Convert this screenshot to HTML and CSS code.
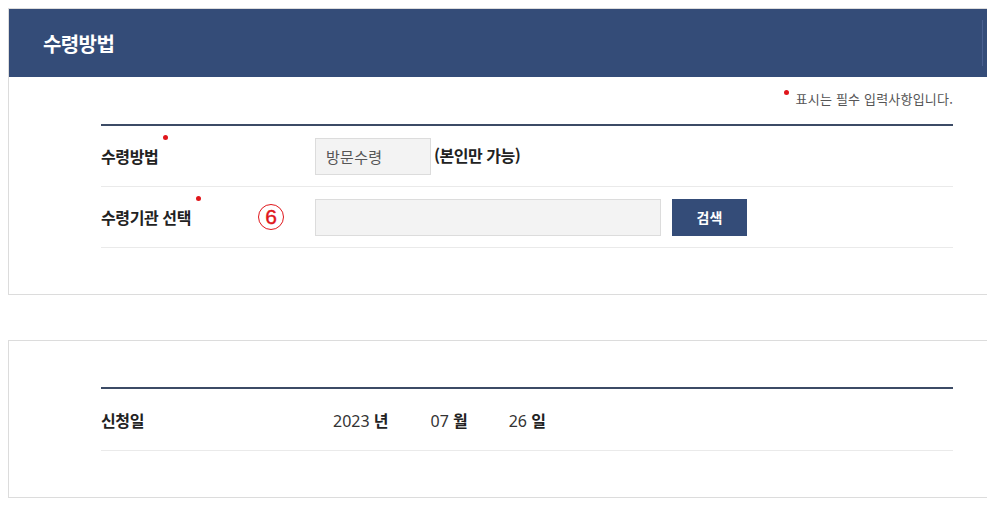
FILE: index.html
```html
<!DOCTYPE html>
<html lang="ko">
<head>
<meta charset="utf-8">
<link rel="stylesheet" href="styles.css">
</head>
<body>
<div class="page">
  <section class="panel">
    <div class="panel-head"><h2>수령방법</h2><span class="head-edge"></span></div>
    <div class="panel-body">
      <p class="note"><span class="dot"></span>표시는 필수 입력사항입니다.</p>
      <div class="form">
        <div class="row">
          <div class="label">수령방법<span class="req"></span></div>
          <div class="value">
            <span class="box box-small">방문수령</span>
            <span class="strong">(본인만 가능)</span>
          </div>
        </div>
        <div class="row">
          <div class="label">수령기관 선택<span class="req"></span><span class="mark">6</span></div>
          <div class="value">
            <span class="box box-wide"></span>
            <button class="btn">검색</button>
          </div>
        </div>
      </div>
    </div>
  </section>
  <section class="panel panel-2">
    <div class="panel-body body-2">
      <div class="form">
        <div class="row row-2">
          <div class="label">신청일</div>
          <div class="value date">
            <span class="d-year">2023 <b>년</b></span>
            <span class="d-month">07 <b>월</b></span>
            <span class="d-day">26 <b>일</b></span>
          </div>
        </div>
      </div>
    </div>
  </section>
</div>
</body>
</html>
```
FILE: styles.css
```css
html, body {
  margin: 0;
  padding: 0;
  background: #fff;
  overflow: hidden;
}
body {
  font-family: "Noto Sans CJK KR", "Noto Sans", sans-serif;
  color: #333;
}
.page {
  padding: 8px 0 0 8px;
  width: 1040px;
}
.panel {
  border: 1px solid #dcdcdc;
  border-right: none;
}
.panel-2 {
  margin-top: 45px;
}
.panel-head {
  background: #344c78;
  height: 68px;
  display: flex;
  align-items: center;
  padding-left: 34px;
  position: relative;
}
.panel-head h2 {
  margin: 0;
  color: #fff;
  font-size: 20px;
  font-weight: 700;
  letter-spacing: -0.6px;
}
.head-edge {
  position: absolute;
  left: 973px;
  top: 11px;
  bottom: 11px;
  width: 1px;
  background: #4a6090;
}
.panel-body {
  width: 852px;
  margin-left: 92px;
  padding-bottom: 46px;
}
.body-2 {
  padding-top: 46px;
  padding-bottom: 46px;
}
.note {
  margin: 0;
  height: 47px;
  display: flex;
  align-items: flex-start;
  justify-content: flex-end;
  padding-top: 12px;
  box-sizing: border-box;
  font-size: 13px;
  color: #555;
  letter-spacing: 0.2px;
}
.note .dot {
  width: 5px;
  height: 5px;
  border-radius: 50%;
  background: #e0161b;
  margin-right: 7px;
  margin-top: 1px;
}
.form {
  border-top: 2px solid #3c4b66;
}
.row {
  display: flex;
  align-items: center;
  height: 61px;
  border-bottom: 1px solid #eaeaea;
  box-sizing: border-box;
}
.row-2 {
  height: 62px;
}
.label {
  width: 214px;
  flex: none;
  font-size: 16px;
  font-weight: 700;
  color: #222;
  letter-spacing: -0.4px;
  position: relative;
  display: flex;
  align-items: center;
}
.req {
  display: inline-block;
  width: 5px;
  height: 5px;
  border-radius: 50%;
  background: #e0161b;
  align-self: flex-start;
  margin-left: 5px;
  margin-top: -9px;
}
.mark {
  position: absolute;
  left: 157px;
  top: 50%;
  transform: translateY(-50%);
  width: 26px;
  height: 26px;
  border: 1.6px solid #e0161b;
  border-radius: 50%;
  box-sizing: border-box;
  color: #e0161b;
  font-family: "Liberation Sans", sans-serif;
  font-weight: 400;
  font-size: 21px;
  line-height: 23px;
  text-align: center;
  letter-spacing: 0;
  -webkit-text-stroke: 0.4px #e0161b;
}
.value {
  display: flex;
  align-items: center;
}
.box {
  display: inline-flex;
  align-items: center;
  height: 37px;
  box-sizing: border-box;
  border: 1px solid #dcdcdc;
  background: #f3f3f3;
  font-size: 15px;
  color: #555;
  padding-left: 10px;
}
.box-small {
  width: 116px;
  letter-spacing: 0.3px;
}
.box-wide {
  width: 346px;
}
.strong {
  margin-left: 3px;
  font-size: 16px;
  font-weight: 700;
  color: #222;
  letter-spacing: -0.5px;
  margin-top: -3px;
}
.btn {
  margin-left: 11px;
  width: 75px;
  height: 37px;
  border: none;
  background: #344c78;
  color: #fff;
  font-family: inherit;
  font-size: 14px;
  font-weight: 700;
  padding: 0;
}
.date {
  font-size: 16px;
  color: #333;
  font-family: "Noto Sans", "Noto Sans CJK KR", sans-serif;
}
.date b {
  font-family: "Noto Sans CJK KR", sans-serif;
  font-weight: 700;
  color: #222;
}
.d-year { margin-left: 18px; }
.d-month { margin-left: 42px; }
.d-day { margin-left: 41px; }
```
